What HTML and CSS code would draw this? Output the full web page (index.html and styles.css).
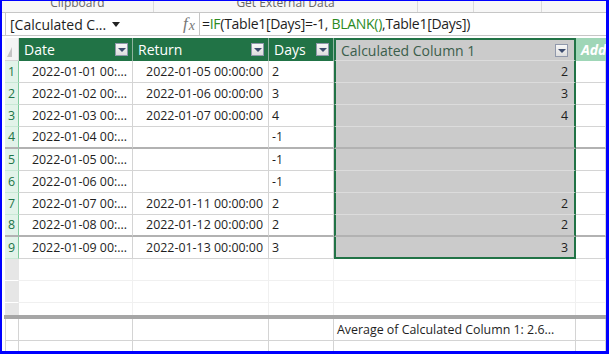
FILE: index.html
```html
<!DOCTYPE html>
<html lang="en">
  <head>
    <meta charset="utf-8" />
    <title>Power Pivot - Calculated Column</title>
    <link rel="stylesheet" href="styles.css">
  </head>

  <body>
    <div class="frame">
      <div class="ribbon">
        <div class="group g1"><span>Clipboard</span></div>
        <div class="group g2"><span>Get External Data</span></div>
        <div class="group g3"></div>
        <div class="group g4"></div>
        <div class="group g5"></div>
      </div>

      <div class="formulaBar">
        <div class="nameBox">
          <span>[Calculated C...</span>
          <svg width="8" height="5" viewBox="0 0 8 5"><polygon points="0,0 8,0 4,5" fill="#222" /></svg>
        </div>
        <div class="fx"><span class="f">f</span><span class="x">x</span></div>
        <div class="formula">=<span class="fn">IF</span>(Table1[Days]=-1, <span class="fn">BLANK()</span>,Table1[Days])</div>
      </div>

      <div class="sheet">
        <div class="row head">
          <div class="cell corner"><svg width="5" height="10" viewBox="0 0 5 10"><polygon points="5,0 5,10 0,10" fill="#c4c4c4" /></svg></div>
          <div class="cell hcell">Date<i class="drop"></i></div>
          <div class="cell hcell">Return<i class="drop"></i></div>
          <div class="cell hcell">Days<i class="drop"></i></div>
          <div class="cell hcell calc">Calculated Column 1<i class="drop"></i></div>
          <div class="cell hcell add">Add</div>
        </div>

        <div class="row">
          <div class="cell num">1</div>
          <div class="cell date">2022-01-01 00:...</div>
          <div class="cell date">2022-01-05 00:00:00</div>
          <div class="cell days">2</div>
          <div class="cell calc">2</div>
          <div class="cell"></div>
        </div>
        <div class="row">
          <div class="cell num">2</div>
          <div class="cell date">2022-01-02 00:...</div>
          <div class="cell date">2022-01-06 00:00:00</div>
          <div class="cell days">3</div>
          <div class="cell calc">3</div>
          <div class="cell"></div>
        </div>
        <div class="row">
          <div class="cell num">3</div>
          <div class="cell date">2022-01-03 00:...</div>
          <div class="cell date">2022-01-07 00:00:00</div>
          <div class="cell days">4</div>
          <div class="cell calc">4</div>
          <div class="cell"></div>
        </div>
        <div class="row pageEnd">
          <div class="cell num">4</div>
          <div class="cell date">2022-01-04 00:...</div>
          <div class="cell date"></div>
          <div class="cell days">-1</div>
          <div class="cell calc"></div>
          <div class="cell"></div>
        </div>
        <div class="row">
          <div class="cell num">5</div>
          <div class="cell date">2022-01-05 00:...</div>
          <div class="cell date"></div>
          <div class="cell days">-1</div>
          <div class="cell calc"></div>
          <div class="cell"></div>
        </div>
        <div class="row">
          <div class="cell num">6</div>
          <div class="cell date">2022-01-06 00:...</div>
          <div class="cell date"></div>
          <div class="cell days">-1</div>
          <div class="cell calc"></div>
          <div class="cell"></div>
        </div>
        <div class="row">
          <div class="cell num">7</div>
          <div class="cell date">2022-01-07 00:...</div>
          <div class="cell date">2022-01-11 00:00:00</div>
          <div class="cell days">2</div>
          <div class="cell calc">2</div>
          <div class="cell"></div>
        </div>
        <div class="row pageEnd">
          <div class="cell num">8</div>
          <div class="cell date">2022-01-08 00:...</div>
          <div class="cell date">2022-01-12 00:00:00</div>
          <div class="cell days">2</div>
          <div class="cell calc">2</div>
          <div class="cell"></div>
        </div>
        <div class="row last">
          <div class="cell num">9</div>
          <div class="cell date">2022-01-09 00:...</div>
          <div class="cell date">2022-01-13 00:00:00</div>
          <div class="cell days">3</div>
          <div class="cell calc">3</div>
          <div class="cell"></div>
        </div>

        <div class="row empty">
          <div class="cell num"></div><div class="cell"></div><div class="cell"></div>
          <div class="cell"></div><div class="cell"></div><div class="cell"></div>
        </div>
        <div class="row empty">
          <div class="cell num"></div><div class="cell"></div><div class="cell"></div>
          <div class="cell"></div><div class="cell"></div><div class="cell"></div>
        </div>
        <div class="row empty">
          <div class="cell num"></div><div class="cell"></div><div class="cell"></div>
          <div class="cell"></div><div class="cell"></div><div class="cell"></div>
        </div>
      </div>

      <div class="split"></div>

      <div class="totals">
        <div class="row total">
          <div class="cell num"></div><div class="cell"></div><div class="cell"></div>
          <div class="cell"></div><div class="cell measure">Average of Calculated Column 1: 2.6...</div><div class="cell"></div>
        </div>
        <div class="row total">
          <div class="cell num"></div><div class="cell"></div><div class="cell"></div>
          <div class="cell"></div><div class="cell"></div><div class="cell"></div>
        </div>
      </div>
    </div>
  </body>
</html>
```

FILE: styles.css
```css
body {
  margin: 0;
  font-family: 'Open Sans', 'Noto Sans', sans-serif;
  color: #1e1e1e;
}

.frame {
  width: 609px;
  height: 354px;
  box-sizing: border-box;
  border: solid #0000ff;
  border-width: 1px 3px 3px 2px;
  display: flex;
  flex-direction: column;
  overflow: hidden;
  background: #fff;
}

/* ribbon strip, scrolled so only the group labels' lower half shows */
.ribbon {
  flex: none;
  height: 11px;
  display: flex;
  background: #f7f7f7;
  border-bottom: 1px solid #c6c6c6;
  overflow: hidden;
}

.group {
  box-sizing: border-box;
  border-right: 1px solid #dadada;
  display: flex;
  justify-content: center;
  align-items: flex-start;
  overflow: hidden;
}

.group span {
  font-size: 12px;
  line-height: 14px;
  margin-top: -5px;
  color: #666;
  white-space: nowrap;
}

.g1 { width: 152px; }
.g2 { width: 264px; }
.g3 { width: 56px; }
.g4 { width: 68px; }
.g5 { flex: 1; border-right: none; }

.formulaBar {
  flex: none;
  height: 22px;
  display: flex;
  padding-left: 3px;
  border-bottom: 1px solid #c6c6c6;
  margin-bottom: 2px;
}

.nameBox {
  width: 124px;
  box-sizing: border-box;
  border-left: 1px solid #c6c6c6;
  display: flex;
  align-items: center;
  justify-content: space-between;
  padding: 0 9px 0 4px;
  font-size: 14px;
}

.fx {
  width: 71px;
  box-sizing: border-box;
  border-right: 1px solid #c6c6c6;
  display: flex;
  justify-content: flex-end;
  align-items: center;
  padding-right: 4px;
  font-family: 'Liberation Serif', serif;
  font-style: italic;
  color: #777;
}

.fx .f { font-size: 17px; }
.fx .x { font-size: 14px; position: relative; top: 2px; margin-left: 1px; }

.formula {
  padding-left: 2px;
  font-size: 14px;
  line-height: 22px;
  white-space: nowrap;
  letter-spacing: -0.28px;
}

.formula .fn { color: #2b8a1e; }

.sheet {
  flex: 1;
  min-height: 0;
  overflow: hidden;
  padding-left: 3px;
}

.row {
  display: grid;
  grid-template-columns: 14px 114px 136px 65px 242px 1fr;
  height: 22px;
}

.cell {
  box-sizing: border-box;
  border-right: 1px solid #d4d4d4;
  border-bottom: 1px solid #d4d4d4;
  font-size: 12.4px;
  line-height: 21px;
  white-space: nowrap;
  overflow: hidden;
  padding: 0 5px;
}

.head {
  height: 23px;
  background: #217346;
}

.hcell {
  display: flex;
  align-items: center;
  justify-content: space-between;
  color: #fff;
  font-size: 14px;
  border-color: #8fb3a0;
  border-bottom: none;
  padding: 0 4px 0 5px;
}

.corner {
  background: #f4f4f4;
  border-color: #d4d4d4;
  padding: 0 0 3px 2px;
  display: flex;
  align-items: flex-end;
}

.drop {
  width: 13px;
  height: 13px;
  box-sizing: border-box;
  border: 1px solid #9098ab;
  background: linear-gradient(#f7f7f7, #dedede);
  position: relative;
}

.drop::after {
  content: '';
  position: absolute;
  left: 2px;
  top: 4px;
  border: 4px solid transparent;
  border-top: 4px solid #3d4c6e;
  border-bottom: none;
}

.hcell.calc {
  background: #d4efdf;
  color: #3b5e4b;
  border: 2px solid #217346;
  border-bottom: 1px solid #86d1a5;
}

.hcell.add {
  background: #9fd6b7;
  font-weight: 700;
  font-style: italic;
  border: none;
  justify-content: flex-start;
  padding-left: 5px;
}

.num {
  background: #e2f3e9;
  color: #217346;
  border-right-color: #80cb9e;
  border-bottom-color: #c8e8d5;
  text-align: center;
  padding: 0;
}

.date { text-align: right; }
.days { padding-left: 3px; }

.cell.calc {
  background: #cbcbcb;
  border-left: 2px solid #217346;
  border-right: 2px solid #217346;
  border-bottom-color: #dcdcdc;
  text-align: right;
  padding-right: 6px;
}

.pageEnd .cell {
  border-bottom: 2px solid #b2b2b2;
  line-height: 20px;
}

.last .cell.calc {
  border-bottom: 2px solid #217346;
}

.empty .cell {
  border-color: #f0f0f0;
}

.empty .num {
  background: #e6e6e6;
  border-right-color: #e6e6e6;
  border-bottom-color: #fff;
}

.split {
  flex: none;
  height: 4px;
  margin-left: 2px;
  background: #a6a6a6;
}

.totals {
  flex: none;
  height: 32px;
  overflow: hidden;
  padding-left: 3px;
}

.total .num {
  background: #fff;
  border-left: 1px solid #d4d4d4;
  border-right-color: #d4d4d4;
  border-bottom-color: #d4d4d4;
}

.measure {
  padding-left: 3px;
}
```
